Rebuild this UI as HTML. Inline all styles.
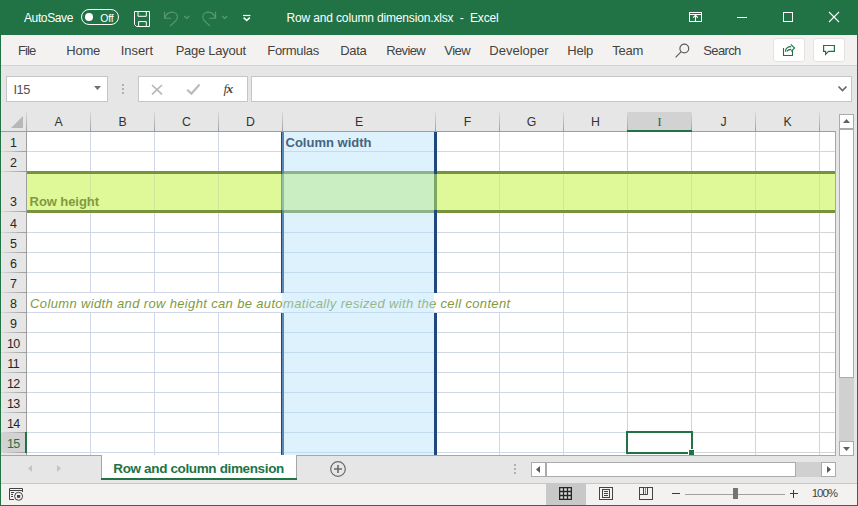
<!DOCTYPE html>
<html>
<head>
<meta charset="utf-8">
<title>Row and column dimension.xlsx - Excel</title>
<style>
html,body{margin:0;padding:0;}
body{width:858px;height:506px;overflow:hidden;position:relative;background:#e6e6e6;font-family:"Liberation Sans",sans-serif;font-size:12px;color:#262626;}
.a{position:absolute;}
.t{position:absolute;white-space:nowrap;line-height:1;}
#title{left:0;top:0;width:858px;height:35px;background:#217346;}
#title .t{color:#fff;}
#menu{left:1px;top:35px;width:856px;height:30px;background:#f3f2f1;border-bottom:1px solid #d2d2d2;}
#menu .t{color:#444341;}
.box{position:absolute;background:#fff;border:1px solid #c6c6c6;box-sizing:border-box;}
.btn{position:absolute;background:#fff;border:1px solid #e5e3e1;border-radius:3px;box-sizing:border-box;}
#grid{left:27px;top:132px;width:808px;height:323px;background:#fff;overflow:hidden;}
.ch{position:absolute;top:115.6px;font-size:12.3px;color:#333;text-align:center;line-height:1;}
.chs{position:absolute;top:112px;width:1px;height:20px;background:linear-gradient(to bottom,#dadada,#9c9c9c);}
.rh{position:absolute;left:1px;width:25px;text-align:center;font-size:12.5px;color:#262626;line-height:1;}
.sb{position:absolute;background:#fff;border:1px solid #ababab;box-sizing:border-box;}
svg{position:absolute;overflow:visible;}
</style>
</head>
<body>
<div id="title" class="a">
<span class="t" style="left:24.00px;top:12.00px;font-size:12px;letter-spacing:-0.389px;">AutoSave</span>
<div class="a" style="left:81px;top:9px;width:38px;height:16px;border:1px solid #fff;border-radius:8px;box-sizing:border-box;"></div>
<div class="a" style="left:85px;top:13px;width:8px;height:8px;border-radius:4px;background:#fff;"></div>
<span class="t" style="left:100.30px;top:12.50px;font-size:10.5px;letter-spacing:-0.180px;">Off</span>
<svg style="left:134px;top:10.6px" width="16" height="16" viewBox="0 0 16 16" fill="none" stroke="#fff" stroke-width="1"><path d="M0.5 0.5H15.5V15.5H2.5L0.5 13.5Z"/><path d="M4 0.5V5.3H12.3V0.5"/><path d="M4.6 15.5V10.6H12.3V15.5"/></svg>
<svg style="left:0;top:0" width="300" height="35" viewBox="0 0 300 35" fill="none" stroke="#5b9a75" stroke-width="1.1">
<path d="M164.6 11.8V18.2H171"/><path d="M164.8 18C166 14.5 169 12.1 172 12.1C175.3 12.1 177.4 14.4 177.4 17C177.4 19.4 176 20.6 170 26"/>
<path d="M184.3 16L186.8 18.5L189.3 16"/>
<path d="M215.6 11.8V18.2H209.2"/><path d="M215.4 18C214.2 14.5 211.2 12.1 208.2 12.1C204.9 12.1 202.8 14.4 202.8 17C202.8 19.4 204.2 20.6 210.2 26"/>
<path d="M222.2 16L224.7 18.5L227.2 16"/>
<path d="M243 15.5H250.4" stroke="#fff" stroke-width="1.2"/><path d="M243.6 17.6L246.7 20.4L249.8 17.6" stroke="#fff" stroke-width="1.5"/>
</svg>
<span class="t" style="left:286.60px;top:12.00px;font-size:12px;letter-spacing:-0.158px;">Row and column dimension.xlsx&nbsp; -&nbsp; Excel</span>
<svg style="left:689px;top:12px" width="13" height="10" viewBox="0 0 13 10" fill="none" stroke="#fff" stroke-width="1"><rect x="0.5" y="0.5" width="12" height="9"/><path d="M0.5 2.5H12.5"/><path d="M6.5 9.5V3.3" stroke-width="1.1"/><path d="M4.2 5.6L6.5 3.3L8.8 5.6" stroke-width="1.2"/></svg>
<div class="a" style="left:737px;top:17px;width:10px;height:1px;background:#fff;"></div>
<div class="a" style="left:783px;top:12px;width:10px;height:10px;border:1px solid #fff;box-sizing:border-box;"></div>
<svg style="left:829px;top:12px" width="10" height="10" viewBox="0 0 10 10" fill="none" stroke="#fff" stroke-width="1.1"><path d="M0 0L10 10M10 0L0 10"/></svg>
</div>
<div id="menu" class="a">
<span class="t" style="left:17.00px;top:9.30px;font-size:13px;letter-spacing:-0.877px;">File</span>
<span class="t" style="left:65.30px;top:9.30px;font-size:13px;letter-spacing:-0.237px;">Home</span>
<span class="t" style="left:119.70px;top:9.30px;font-size:13px;letter-spacing:-0.040px;">Insert</span>
<span class="t" style="left:174.70px;top:9.30px;font-size:13px;letter-spacing:-0.269px;">Page Layout</span>
<span class="t" style="left:266.30px;top:9.30px;font-size:13px;letter-spacing:-0.316px;">Formulas</span>
<span class="t" style="left:339.30px;top:9.30px;font-size:13px;letter-spacing:-0.365px;">Data</span>
<span class="t" style="left:385.30px;top:9.30px;font-size:13px;letter-spacing:-0.648px;">Review</span>
<span class="t" style="left:443.30px;top:9.30px;font-size:13px;letter-spacing:-0.517px;">View</span>
<span class="t" style="left:488.30px;top:9.30px;font-size:13px;letter-spacing:0.015px;">Developer</span>
<span class="t" style="left:566.30px;top:9.30px;font-size:13px;letter-spacing:-0.238px;">Help</span>
<span class="t" style="left:611.30px;top:9.30px;font-size:13px;letter-spacing:-0.262px;">Team</span>
<span class="t" style="left:702.30px;top:9.30px;font-size:13px;letter-spacing:-0.642px;">Search</span>
<svg style="left:674px;top:8px" width="15" height="15" viewBox="0 0 15 15" fill="none" stroke="#605e5c" stroke-width="1.2"><circle cx="9.3" cy="5.5" r="4.4"/><path d="M6.2 8.7L0.6 14.3"/></svg>
<div class="btn" style="left:772px;top:3px;width:32px;height:24px;"></div>
<div class="btn" style="left:812px;top:3px;width:32px;height:24px;"></div>
<svg style="left:-1px;top:-35px" width="858" height="70" viewBox="0 0 858 70" fill="none" stroke="#217346" stroke-width="1.1">
<path d="M783.5 48V55.5H792.5V50.2"/><path d="M785.4 51.6C785.6 48.4 788 46.6 791.2 46.6"/><path d="M786.8 51.4C787.6 49.9 789 49.4 791.3 49.4"/><path d="M790.8 44.3L794.6 48L791.2 51.4"/>
<path d="M823.6 45.5H834.4V51.4H828.6L825.6 54.4V51.4H823.6Z" stroke-width="1.2"/>
</svg>
</div>
<div class="box" style="left:6px;top:76px;width:102px;height:26px;"></div>
<span class="t" style="left:13.40px;top:84.00px;font-size:12.8px;letter-spacing:-0.346px;color:#505050;">I15</span>
<svg style="left:94px;top:86px" width="7" height="4" viewBox="0 0 7 4"><path d="M0 0L3.5 4L7 0Z" fill="#707070"/></svg>
<div class="a" style="left:122px;top:84px;width:2px;height:2px;background:#b0b0b0;"></div>
<div class="a" style="left:122px;top:88px;width:2px;height:2px;background:#b0b0b0;"></div>
<div class="a" style="left:122px;top:92px;width:2px;height:2px;background:#b0b0b0;"></div>
<div class="box" style="left:138px;top:76px;width:110px;height:26px;"></div>
<svg style="left:152px;top:84.6px" width="10" height="9.4" viewBox="0 0 10 9.4" fill="none" stroke="#b6b6b6" stroke-width="1.6"><path d="M0 0L10 9.4M10 0L0 9.4"/></svg>
<svg style="left:186px;top:83px" width="15" height="12" viewBox="0 0 15 12" fill="none" stroke="#bcbcbc" stroke-width="2.2"><path d="M1.2 6.8L5.4 10.6L13.6 1.4"/></svg>
<span class="t" style="left:223.5px;top:82.3px;font-family:'Liberation Serif',serif;font-style:italic;font-weight:bold;font-size:13.5px;color:#484848;letter-spacing:-0.8px;"><span style="font-weight:normal;">f</span>x</span>
<div class="box" style="left:251px;top:76px;width:601px;height:26px;"></div>
<svg style="left:838px;top:86px" width="9" height="6" viewBox="0 0 9 6" fill="none" stroke="#666" stroke-width="1.6"><path d="M0.5 0.5L4.5 4.5L8.5 0.5"/></svg>
<div class="a" style="left:628px;top:112px;width:63px;height:18px;background:#d2d2d2;"></div>
<div class="a" style="left:627px;top:130px;width:65px;height:2px;background:#217346;"></div>
<div class="ch" style="left:27px;width:63px;">A</div>
<div class="ch" style="left:91px;width:63px;">B</div>
<div class="ch" style="left:155px;width:63px;">C</div>
<div class="ch" style="left:219px;width:63px;">D</div>
<div class="ch" style="left:283px;width:152px;">E</div>
<div class="ch" style="left:436px;width:63px;">F</div>
<div class="ch" style="left:500px;width:63px;">G</div>
<div class="ch" style="left:564px;width:63px;">H</div>
<div class="ch" style="left:628px;width:63px;color:#217346;font-family:'Liberation Serif',serif;font-size:13.5px;top:114.8px;">I</div>
<div class="ch" style="left:692px;width:63px;">J</div>
<div class="ch" style="left:756px;width:63px;">K</div>
<div class="chs" style="left:26px;"></div>
<div class="chs" style="left:90px;"></div>
<div class="chs" style="left:154px;"></div>
<div class="chs" style="left:218px;"></div>
<div class="chs" style="left:282px;"></div>
<div class="chs" style="left:435px;"></div>
<div class="chs" style="left:499px;"></div>
<div class="chs" style="left:563px;"></div>
<div class="chs" style="left:627px;"></div>
<div class="chs" style="left:691px;"></div>
<div class="chs" style="left:755px;"></div>
<div class="chs" style="left:819px;"></div>
<div class="a" style="left:1px;top:131px;width:835px;height:1px;background:#9e9e9e;"></div>
<div class="a" style="left:627px;top:130px;width:65px;height:2px;background:#217346;"></div>
<div class="a" style="left:11px;top:116px;width:0;height:0;border-left:12px solid transparent;border-bottom:12px solid #b7b7b7;"></div>
<div class="a" style="left:1px;top:132px;width:25px;height:323px;background:#e6e6e6;"></div>
<div class="a" style="left:1px;top:433px;width:24px;height:19px;background:#d2d2d2;"></div>
<div class="a" style="left:25px;top:432px;width:2px;height:21px;background:#217346;"></div>
<div class="rh" style="top:137px;">1</div>
<div class="a" style="left:1px;top:151px;width:25px;height:1px;background:linear-gradient(to right,#dadada,#9c9c9c);"></div>
<div class="rh" style="top:157px;">2</div>
<div class="a" style="left:1px;top:171px;width:25px;height:1px;background:linear-gradient(to right,#dadada,#9c9c9c);"></div>
<div class="rh" style="top:196px;">3</div>
<div class="a" style="left:1px;top:211px;width:25px;height:1px;background:linear-gradient(to right,#dadada,#9c9c9c);"></div>
<div class="rh" style="top:218px;">4</div>
<div class="a" style="left:1px;top:232px;width:25px;height:1px;background:linear-gradient(to right,#dadada,#9c9c9c);"></div>
<div class="rh" style="top:238px;">5</div>
<div class="a" style="left:1px;top:252px;width:25px;height:1px;background:linear-gradient(to right,#dadada,#9c9c9c);"></div>
<div class="rh" style="top:258px;">6</div>
<div class="a" style="left:1px;top:272px;width:25px;height:1px;background:linear-gradient(to right,#dadada,#9c9c9c);"></div>
<div class="rh" style="top:278px;">7</div>
<div class="a" style="left:1px;top:292px;width:25px;height:1px;background:linear-gradient(to right,#dadada,#9c9c9c);"></div>
<div class="rh" style="top:298px;">8</div>
<div class="a" style="left:1px;top:312px;width:25px;height:1px;background:linear-gradient(to right,#dadada,#9c9c9c);"></div>
<div class="rh" style="top:318px;">9</div>
<div class="a" style="left:1px;top:332px;width:25px;height:1px;background:linear-gradient(to right,#dadada,#9c9c9c);"></div>
<div class="rh" style="top:338px;letter-spacing:-0.7px;text-indent:-0.7px;">10</div>
<div class="a" style="left:1px;top:352px;width:25px;height:1px;background:linear-gradient(to right,#dadada,#9c9c9c);"></div>
<div class="rh" style="top:358px;letter-spacing:-0.7px;text-indent:-0.7px;">11</div>
<div class="a" style="left:1px;top:372px;width:25px;height:1px;background:linear-gradient(to right,#dadada,#9c9c9c);"></div>
<div class="rh" style="top:378px;letter-spacing:-0.7px;text-indent:-0.7px;">12</div>
<div class="a" style="left:1px;top:392px;width:25px;height:1px;background:linear-gradient(to right,#dadada,#9c9c9c);"></div>
<div class="rh" style="top:398px;letter-spacing:-0.7px;text-indent:-0.7px;">13</div>
<div class="a" style="left:1px;top:412px;width:25px;height:1px;background:linear-gradient(to right,#dadada,#9c9c9c);"></div>
<div class="rh" style="top:418px;letter-spacing:-0.7px;text-indent:-0.7px;">14</div>
<div class="a" style="left:1px;top:432px;width:25px;height:1px;background:linear-gradient(to right,#dadada,#9c9c9c);"></div>
<div class="rh" style="top:438px;color:#217346;letter-spacing:-0.7px;text-indent:-0.7px;">15</div>
<div class="a" style="left:1px;top:452px;width:25px;height:1px;background:linear-gradient(to right,#dadada,#9c9c9c);"></div>
<div class="a" style="left:26px;top:132px;width:1px;height:323px;background:#9e9e9e;"></div>
<div class="a" style="left:25px;top:432px;width:2px;height:21px;background:#217346;"></div>
<div id="grid" class="a">
<div class="a" style="left:0;top:19px;width:600px;height:1px;background:#d0d7e5;"></div>
<div class="a" style="left:600px;top:19px;width:208px;height:1px;background:#d4d4d4;"></div>
<div class="a" style="left:0;top:39px;width:600px;height:1px;background:#d0d7e5;"></div>
<div class="a" style="left:600px;top:39px;width:208px;height:1px;background:#d4d4d4;"></div>
<div class="a" style="left:0;top:79px;width:600px;height:1px;background:#d0d7e5;"></div>
<div class="a" style="left:600px;top:79px;width:208px;height:1px;background:#d4d4d4;"></div>
<div class="a" style="left:0;top:100px;width:600px;height:1px;background:#d0d7e5;"></div>
<div class="a" style="left:600px;top:100px;width:208px;height:1px;background:#d4d4d4;"></div>
<div class="a" style="left:0;top:120px;width:600px;height:1px;background:#d0d7e5;"></div>
<div class="a" style="left:600px;top:120px;width:208px;height:1px;background:#d4d4d4;"></div>
<div class="a" style="left:0;top:140px;width:600px;height:1px;background:#d0d7e5;"></div>
<div class="a" style="left:600px;top:140px;width:208px;height:1px;background:#d4d4d4;"></div>
<div class="a" style="left:0;top:160px;width:600px;height:1px;background:#d0d7e5;"></div>
<div class="a" style="left:600px;top:160px;width:208px;height:1px;background:#d4d4d4;"></div>
<div class="a" style="left:0;top:180px;width:600px;height:1px;background:#d0d7e5;"></div>
<div class="a" style="left:600px;top:180px;width:208px;height:1px;background:#d4d4d4;"></div>
<div class="a" style="left:0;top:200px;width:600px;height:1px;background:#d0d7e5;"></div>
<div class="a" style="left:600px;top:200px;width:208px;height:1px;background:#d4d4d4;"></div>
<div class="a" style="left:0;top:220px;width:600px;height:1px;background:#d0d7e5;"></div>
<div class="a" style="left:600px;top:220px;width:208px;height:1px;background:#d4d4d4;"></div>
<div class="a" style="left:0;top:240px;width:600px;height:1px;background:#d0d7e5;"></div>
<div class="a" style="left:600px;top:240px;width:208px;height:1px;background:#d4d4d4;"></div>
<div class="a" style="left:0;top:260px;width:600px;height:1px;background:#d0d7e5;"></div>
<div class="a" style="left:600px;top:260px;width:208px;height:1px;background:#d4d4d4;"></div>
<div class="a" style="left:0;top:280px;width:600px;height:1px;background:#d0d7e5;"></div>
<div class="a" style="left:600px;top:280px;width:208px;height:1px;background:#d4d4d4;"></div>
<div class="a" style="left:0;top:300px;width:600px;height:1px;background:#d0d7e5;"></div>
<div class="a" style="left:600px;top:300px;width:208px;height:1px;background:#d4d4d4;"></div>
<div class="a" style="left:0;top:320px;width:600px;height:1px;background:#d0d7e5;"></div>
<div class="a" style="left:600px;top:320px;width:208px;height:1px;background:#d4d4d4;"></div>
<div class="a" style="left:0;top:340px;width:600px;height:1px;background:#d0d7e5;"></div>
<div class="a" style="left:600px;top:340px;width:208px;height:1px;background:#d4d4d4;"></div>
<div class="a" style="left:63px;top:0;width:1px;height:323px;background:#d0d7e5;"></div>
<div class="a" style="left:127px;top:0;width:1px;height:323px;background:#d0d7e5;"></div>
<div class="a" style="left:191px;top:0;width:1px;height:323px;background:#d0d7e5;"></div>
<div class="a" style="left:472px;top:0;width:1px;height:323px;background:#d0d7e5;"></div>
<div class="a" style="left:536px;top:0;width:1px;height:323px;background:#d0d7e5;"></div>
<div class="a" style="left:600px;top:0;width:1px;height:323px;background:#d4d4d4;"></div>
<div class="a" style="left:664px;top:0;width:1px;height:323px;background:#d4d4d4;"></div>
<div class="a" style="left:728px;top:0;width:1px;height:323px;background:#d4d4d4;"></div>
<div class="a" style="left:792px;top:0;width:1px;height:323px;background:#d4d4d4;"></div>
<div class="a" style="left:0;top:161px;width:536px;height:19px;background:#fff;"></div>
<div class="a" style="left:0;top:42px;width:808px;height:37px;background:#dff898;"></div>
<div class="a" style="left:63px;top:42px;width:1px;height:36px;background:#d0e59a;"></div>
<div class="a" style="left:127px;top:42px;width:1px;height:36px;background:#d0e59a;"></div>
<div class="a" style="left:191px;top:42px;width:1px;height:36px;background:#d0e59a;"></div>
<div class="a" style="left:472px;top:42px;width:1px;height:36px;background:#d0e59a;"></div>
<div class="a" style="left:536px;top:42px;width:1px;height:36px;background:#d0e59a;"></div>
<div class="a" style="left:600px;top:42px;width:1px;height:36px;background:#d0e59a;"></div>
<div class="a" style="left:664px;top:42px;width:1px;height:36px;background:#d0e59a;"></div>
<div class="a" style="left:728px;top:42px;width:1px;height:36px;background:#d0e59a;"></div>
<div class="a" style="left:792px;top:42px;width:1px;height:36px;background:#d0e59a;"></div>
<div class="a" style="left:0;top:39px;width:808px;height:3px;background:#77933c;"></div>
<div class="a" style="left:0;top:78px;width:808px;height:3px;background:#77933c;"></div>
<span class="t" style="left:2.60px;top:63.00px;font-size:13px;letter-spacing:-0.074px;font-weight:bold;color:#819a40;">Row height</span>
<span class="t" style="left:3.10px;top:164.50px;font-size:13px;letter-spacing:0.350px;font-style:italic;color:#7f9a3e;">Column width and row height can be automatically resized with the cell content</span>
<div class="a" style="left:254px;top:0px;width:3px;height:161px;background:#1f497d;"></div>
<div class="a" style="left:254px;top:181px;width:3px;height:142px;background:#1f497d;"></div>
<div class="a" style="left:254px;top:42px;width:3px;height:36px;background:#7ca864;"></div>
<div class="a" style="left:255px;top:0;width:152px;height:323px;background:rgba(175,223,250,0.42);"></div>
<div class="a" style="left:407px;top:0px;width:3px;height:161px;background:#1f497d;"></div>
<div class="a" style="left:407px;top:181px;width:3px;height:142px;background:#1f497d;"></div>
<div class="a" style="left:407px;top:42px;width:3px;height:36px;background:#7ca864;"></div>
<span class="t" style="left:258.50px;top:4.00px;font-size:13px;letter-spacing:0.006px;font-weight:bold;color:#47637f;">Column width</span>
<div class="a" style="left:599px;top:299px;width:67px;height:23px;border:2px solid #217346;box-sizing:border-box;"></div>
<div class="a" style="left:661px;top:317px;width:7px;height:7px;background:#217346;border:1px solid #fff;box-sizing:border-box;"></div>
</div>
<div class="a" style="left:835px;top:132px;width:1px;height:324px;background:#a6a6a6;"></div>
<div class="a" style="left:1px;top:455px;width:100px;height:1px;background:#a6a6a6;"></div>
<div class="a" style="left:297px;top:455px;width:539px;height:1px;background:#a6a6a6;"></div>
<div class="sb" style="left:839px;top:114px;width:15px;height:15px;"></div>
<svg style="left:843px;top:119px" width="7" height="4" viewBox="0 0 7 4"><path d="M0 4L3.5 0L7 4Z" fill="#606060"/></svg>
<div class="sb" style="left:839px;top:129px;width:15px;height:249px;"></div>
<div class="a" style="left:839px;top:378px;width:15px;height:63px;background:#d0d0d0;"></div>
<div class="sb" style="left:839px;top:441px;width:15px;height:15px;"></div>
<svg style="left:843px;top:447px" width="7" height="4" viewBox="0 0 7 4"><path d="M0 0L3.5 4L7 0Z" fill="#606060"/></svg>
<svg style="left:28px;top:465px" width="4" height="7" viewBox="0 0 4 7"><path d="M4 0L0 3.5L4 7Z" fill="#c4c4c4"/></svg>
<svg style="left:57px;top:465px" width="4" height="7" viewBox="0 0 4 7"><path d="M0 0L4 3.5L0 7Z" fill="#c4c4c4"/></svg>
<div class="a" style="left:101px;top:455px;width:196px;height:23px;background:#fff;border-left:1px solid #a6a6a6;border-right:1px solid #a6a6a6;box-sizing:border-box;"></div>
<div class="a" style="left:101px;top:478px;width:196px;height:2px;background:#217346;"></div>
<span class="t" style="left:113.30px;top:461.60px;font-size:13.5px;letter-spacing:-0.360px;font-weight:bold;color:#217346;">Row and column dimension</span>
<svg style="left:330px;top:461px" width="16" height="16" viewBox="0 0 16 16" fill="none" stroke="#6a6a6a" stroke-width="1.2"><circle cx="8" cy="8" r="7.3"/><path d="M4 8H12M8 4V12" stroke-width="1.6"/></svg>
<div class="a" style="left:514px;top:464px;width:2px;height:2px;background:#b0b0b0;"></div>
<div class="a" style="left:514px;top:468px;width:2px;height:2px;background:#b0b0b0;"></div>
<div class="a" style="left:514px;top:472px;width:2px;height:2px;background:#b0b0b0;"></div>
<div class="sb" style="left:531px;top:462px;width:15px;height:15px;"></div>
<svg style="left:536px;top:466px" width="4" height="7" viewBox="0 0 4 7"><path d="M4 0L0 3.5L4 7Z" fill="#5a5a5a"/></svg>
<div class="sb" style="left:546px;top:462px;width:250px;height:15px;"></div>
<div class="a" style="left:796px;top:462px;width:25px;height:15px;background:#d0d0d0;"></div>
<div class="sb" style="left:821px;top:462px;width:15px;height:15px;"></div>
<svg style="left:827px;top:466px" width="4" height="7" viewBox="0 0 4 7"><path d="M0 0L4 3.5L0 7Z" fill="#5a5a5a"/></svg>
<div class="a" style="left:1px;top:483px;width:856px;height:22px;background:#f3f2f1;border-top:1px solid #c8c8c8;box-sizing:border-box;"></div>
<div class="a" style="left:546px;top:484px;width:40px;height:21px;background:#c8c8c8;"></div>
<svg style="left:9px;top:488px" width="15" height="13" viewBox="0 0 15 13" fill="none" stroke="#444" stroke-width="1"><path d="M5 11.5H0.5V0.5H13.5V4"/><path d="M0.5 2.5H13.5"/><path d="M2 4.5H5M2 6.5H4M2 8.5H4"/><circle cx="9.6" cy="8.3" r="4" fill="#f3f2f1"/><rect x="8" y="7" width="3.2" height="2.8" fill="#444" stroke="none"/></svg>
<svg style="left:559px;top:487px" width="13" height="13" viewBox="0 0 13 13" fill="none" stroke="#262626" stroke-width="1.3"><rect x="0.65" y="0.65" width="11.7" height="11.7" fill="#dcdcdc"/><path d="M4.5 0.5V12.5M8.5 0.5V12.5M0.5 4.5H12.5M0.5 8.5H12.5"/></svg>
<svg style="left:599px;top:487px" width="14" height="13" viewBox="0 0 14 13" fill="none" stroke="#444" stroke-width="1"><rect x="0.5" y="0.5" width="13" height="12"/><rect x="3.5" y="2.5" width="7" height="8"/><path d="M5 4.5H9M5 6.5H9M5 8.5H9"/></svg>
<svg style="left:639px;top:487px" width="14" height="13" viewBox="0 0 14 13" fill="none" stroke="#444" stroke-width="1"><rect x="0.5" y="0.5" width="13" height="12"/><path d="M6.5 0.5V7.5" stroke="#8a8a8a"/><path d="M4.5 0.5V7.5M0.5 7.5H8.5V0.5"/></svg>
<div class="a" style="left:672px;top:492.8px;width:8px;height:1.4px;background:#3a3a3a;"></div>
<div class="a" style="left:685px;top:494px;width:100px;height:1px;background:#a0a0a0;"></div>
<div class="a" style="left:733px;top:488px;width:5px;height:11px;background:#747474;"></div>
<div class="a" style="left:790px;top:493px;width:8px;height:1px;background:#3a3a3a;"></div>
<div class="a" style="left:793px;top:490px;width:1px;height:8px;background:#3a3a3a;"></div>
<span class="t" style="left:811.80px;top:488.30px;font-size:11.5px;letter-spacing:-1.080px;color:#444;">100%</span>
<div class="a" style="left:0;top:0;width:1px;height:506px;background:#217346;"></div>
<div class="a" style="left:857px;top:0;width:1px;height:506px;background:#217346;"></div>
<div class="a" style="left:0;top:505px;width:858px;height:1px;background:#217346;"></div>
</body>
</html>
